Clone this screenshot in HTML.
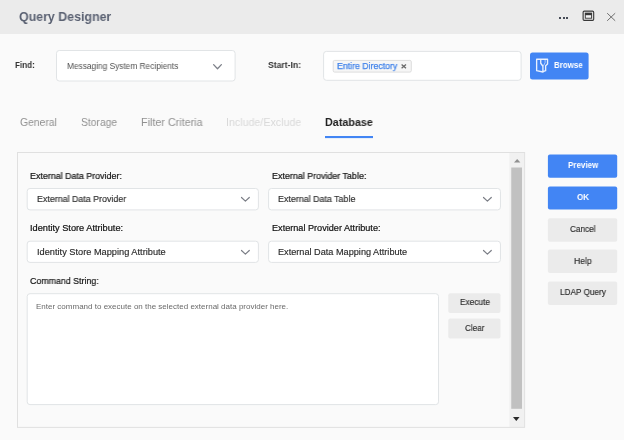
<!DOCTYPE html>
<html><head><meta charset="utf-8">
<style>
*{box-sizing:border-box;margin:0;padding:0}
html,body{width:624px;height:440px;overflow:hidden}
body{background:#fafafa;font-family:"Liberation Sans",sans-serif;position:relative;color:#333}
.abs{position:absolute}
.t{position:absolute;white-space:nowrap;line-height:12px;transform-origin:0 50%;will-change:transform}
.hdr{left:0;top:0;width:624px;height:33.5px;background:#ebebeb}
.box{position:absolute;background:#fff;border:1px solid #e1e5e7;border-radius:2.5px}
.btn{position:absolute;left:548px;width:69.2px;height:23.2px;border-radius:2px}
.blue{background:#4285f4}
.gray{background:#ebebeb}
svg{position:absolute;overflow:visible}
</style></head><body>
<div class="abs hdr"></div>
<!-- header icons -->
<div class="abs" style="left:559px;top:16.8px;width:2.2px;height:2.3px;background:#474c57"></div>
<div class="abs" style="left:562.6px;top:16.8px;width:2.2px;height:2.3px;background:#474c57"></div>
<div class="abs" style="left:566.2px;top:16.8px;width:2.2px;height:2.3px;background:#474c57"></div>
<svg style="left:582px;top:9.6px" width="13" height="12" viewBox="0 0 13 12"><rect x="0.1" y="0.1" width="12.6" height="11.2" rx="1.8" fill="#f7f7f7"/><rect x="1.1" y="1.1" width="10.6" height="9.2" rx="1.1" fill="#e4e4e4" stroke="#383838" stroke-width="1.15"/><rect x="3.3" y="3.2" width="6.3" height="5" fill="#f6f6f6" stroke="#383838" stroke-width="0.9"/><rect x="3.1" y="2.9" width="6.7" height="2.3" fill="#383838"/></svg>
<svg style="left:607.2px;top:12.5px" width="8.4" height="8" viewBox="0 0 8.4 8"><path d="M0.2 0.2L8.2 7.8M8.2 0.2L0.2 7.8" stroke="#6e6e6e" stroke-width="1" fill="none"/></svg>

<!-- boxes -->
<svg style="left:0;top:0" width="624" height="440" viewBox="0 0 624 440">
<rect x="509.4" y="153" width="14.8" height="274" fill="#f1f1f1"/>
<rect x="511.25" y="167.5" width="10.75" height="241.3" fill="#c1c1c1"/>
<rect x="17.5" y="152.5" width="507.10" height="274.90" rx="0" fill="none" stroke="#e0e0e0" stroke-width="1"/>
<rect x="56.5" y="50.5" width="178.60" height="30.50" rx="2.8" fill="#fff" stroke="#e1e4e6" stroke-width="1"/>
<rect x="323.6" y="51.4" width="197.50" height="28.90" rx="2.8" fill="#fff" stroke="#e1e4e6" stroke-width="1"/>
<rect x="27.2" y="188.5" width="231.20" height="21.40" rx="2.8" fill="#fff" stroke="#e1e4e6" stroke-width="1"/>
<rect x="268.6" y="188.5" width="231.85" height="21.40" rx="2.8" fill="#fff" stroke="#e1e4e6" stroke-width="1"/>
<rect x="27.2" y="241.2" width="231.20" height="21.20" rx="2.8" fill="#fff" stroke="#e1e4e6" stroke-width="1"/>
<rect x="268.6" y="241.2" width="231.85" height="21.20" rx="2.8" fill="#fff" stroke="#e1e4e6" stroke-width="1"/>
<rect x="27.2" y="293.7" width="411.30" height="110.90" rx="2.8" fill="#fff" stroke="#e1e4e6" stroke-width="1"/>
<rect x="448.25" y="293.25" width="52.25" height="19.75" rx="2" fill="#ebebeb"/>
<rect x="448.25" y="318.5" width="52.25" height="20.00" rx="2" fill="#ebebeb"/>
<rect x="547.9" y="154.4" width="69.30" height="23.30" rx="2" fill="#4285f4"/>
<rect x="547.9" y="186.6" width="69.30" height="23.00" rx="2" fill="#4285f4"/>
<rect x="547.9" y="218.3" width="69.30" height="23.50" rx="2" fill="#ebebeb"/>
<rect x="547.9" y="249.5" width="69.30" height="23.50" rx="2" fill="#ebebeb"/>
<rect x="547.9" y="281.5" width="69.30" height="23.50" rx="2" fill="#ebebeb"/>
<rect x="530.0" y="52.4" width="58.60" height="27.00" rx="2.5" fill="#4285f4"/>
<rect x="333.2" y="60.4" width="78.1" height="11.7" rx="1.5" fill="#f6f6f6" stroke="#dddddd" stroke-width="1"/>
<rect x="325" y="136" width="48" height="2.1" rx="0" fill="#4285f4"/>
</svg>
<!-- find row -->
<svg style="left:212.8px;top:63.7px" width="9" height="5.4" viewBox="0 0 9 5.4"><path d="M0.6 0.6L4.5 4.7L8.4 0.6" stroke="#7d8089" stroke-width="1.3" fill="none" stroke-linecap="round" stroke-linejoin="round"/></svg>
<svg style="left:401px;top:64.2px" width="5.6" height="4.8" viewBox="0 0 5.6 4.8"><path d="M0.6 0.5L5 4.3M5 0.5L0.6 4.3" stroke="#6a6a6a" stroke-width="1.3" fill="none"/></svg>
<svg style="left:532px;top:54px" width="24" height="24" viewBox="0 0 24 24"><path d="M4.64 5.29L15.55 5.29L15.55 10.09L13.64 11.73L13.64 16.64L11.73 17.45M4.64 5.29L4.64 16.64L10.91 18L10.91 12.27L8.73 9.27L8.73 5.45" stroke="#fff" stroke-opacity="0.88" stroke-width="1.35" fill="none" stroke-linejoin="round" stroke-linecap="round"/><path d="M13.09 5.6L13.09 8.73L11.6 11.5" stroke="#fff" stroke-opacity="0.6" stroke-width="1" fill="none" stroke-linejoin="round" stroke-linecap="round"/></svg>

<!-- tabs -->

<!-- panel -->
<svg style="left:513.6px;top:158.6px" width="6.4" height="3.5" viewBox="0 0 6.4 3.5"><path d="M0 3.5L3.2 0L6.4 3.5Z" fill="#909090"/></svg>
<svg style="left:513.4px;top:417.2px" width="6.6" height="3.9" viewBox="0 0 6.6 3.9"><path d="M0 0H6.6L3.3 3.9Z" fill="#2a2a2a"/></svg>

<svg style="left:241.4px;top:197.1px" width="8.8" height="5" viewBox="0 0 8.8 5"><path d="M0.5 0.5L4.4 4.1L8.3 0.5" stroke="#7b7e86" stroke-width="1.2" fill="none" stroke-linecap="round" stroke-linejoin="round"/></svg>
<svg style="left:483.4px;top:197.1px" width="8.8" height="5" viewBox="0 0 8.8 5"><path d="M0.5 0.5L4.4 4.1L8.3 0.5" stroke="#7b7e86" stroke-width="1.2" fill="none" stroke-linecap="round" stroke-linejoin="round"/></svg>
<svg style="left:241.4px;top:249.8px" width="8.8" height="5" viewBox="0 0 8.8 5"><path d="M0.5 0.5L4.4 4.1L8.3 0.5" stroke="#7b7e86" stroke-width="1.2" fill="none" stroke-linecap="round" stroke-linejoin="round"/></svg>
<svg style="left:483.4px;top:249.8px" width="8.8" height="5" viewBox="0 0 8.8 5"><path d="M0.5 0.5L4.4 4.1L8.3 0.5" stroke="#7b7e86" stroke-width="1.2" fill="none" stroke-linecap="round" stroke-linejoin="round"/></svg>


<!-- right buttons -->

<div class="t" style="left:19.10px;top:10.66px;font-size:12.8px;font-weight:bold;color:#5a6172;transform:scaleX(0.9684)">Query Designer</div>
<div class="t" style="left:15.40px;top:59.48px;font-size:9px;font-weight:bold;color:#333;transform:scaleX(0.9000)">Find:</div>
<div class="t" style="left:66.70px;top:59.89px;font-size:8.7px;color:#505050;transform:scaleX(0.9573)">Messaging System Recipients</div>
<div class="t" style="left:268.20px;top:59.28px;font-size:9px;font-weight:bold;color:#333;transform:scaleX(0.9565)">Start-In:</div>
<div class="t" style="left:337.40px;top:59.78px;font-size:9px;color:#3d80ea;-webkit-text-stroke:0.25px #3d80ea;transform:scaleX(0.9723)">Entire Directory</div>
<div class="t" style="left:553.90px;top:59.28px;font-size:9px;font-weight:bold;color:#fff;transform:scaleX(0.8827)">Browse</div>
<div class="t" style="left:19.80px;top:116.22px;font-size:10.9px;color:#909090;transform:scaleX(0.9523)">General</div>
<div class="t" style="left:80.70px;top:116.22px;font-size:10.9px;color:#909090;transform:scaleX(0.9487)">Storage</div>
<div class="t" style="left:140.70px;top:116.22px;font-size:10.9px;color:#909090;transform:scaleX(0.9883)">Filter Criteria</div>
<div class="t" style="left:225.90px;top:116.22px;font-size:10.9px;color:#d9d9d9;transform:scaleX(0.9793)">Include/Exclude</div>
<div class="t" style="left:325.00px;top:116.22px;font-size:10.9px;font-weight:bold;color:#222;transform:scaleX(0.9889)">Database</div>
<div class="t" style="left:30.20px;top:169.58px;font-size:9px;color:#111;-webkit-text-stroke:0.2px #111;transform:scaleX(0.9877)">External Data Provider:</div>
<div class="t" style="left:36.70px;top:192.88px;font-size:9px;color:#2a2a2a;-webkit-text-stroke:0.15px #2a2a2a;transform:scaleX(0.9851)">External Data Provider</div>
<div class="t" style="left:272.20px;top:169.58px;font-size:9px;color:#111;-webkit-text-stroke:0.2px #111;transform:scaleX(0.9896)">External Provider Table:</div>
<div class="t" style="left:278.40px;top:192.88px;font-size:9px;color:#2a2a2a;-webkit-text-stroke:0.15px #2a2a2a;transform:scaleX(0.9874)">External Data Table</div>
<div class="t" style="left:30.40px;top:222.48px;font-size:9px;color:#111;-webkit-text-stroke:0.2px #111;transform:scaleX(1.0224)">Identity Store Attribute:</div>
<div class="t" style="left:36.80px;top:245.58px;font-size:9px;color:#2a2a2a;-webkit-text-stroke:0.15px #2a2a2a;transform:scaleX(1.0249)">Identity Store Mapping Attribute</div>
<div class="t" style="left:272.20px;top:222.48px;font-size:9px;color:#111;-webkit-text-stroke:0.2px #111;transform:scaleX(1.0134)">External Provider Attribute:</div>
<div class="t" style="left:278.40px;top:245.58px;font-size:9px;color:#2a2a2a;-webkit-text-stroke:0.15px #2a2a2a;transform:scaleX(1.0167)">External Data Mapping Attribute</div>
<div class="t" style="left:30.20px;top:274.88px;font-size:9px;color:#111;-webkit-text-stroke:0.2px #111;transform:scaleX(0.9810)">Command String:</div>
<div class="t" style="left:35.50px;top:300.63px;font-size:8px;color:#6a6a6a;transform:scaleX(1.0006)">Enter command to execute on the selected external data provider here.</div>
<div class="t" style="left:460.00px;top:296.48px;font-size:9px;color:#2a2a2a;-webkit-text-stroke:0.15px #2a2a2a;transform:scaleX(0.9222)">Execute</div>
<div class="t" style="left:465.00px;top:321.98px;font-size:9px;color:#2a2a2a;-webkit-text-stroke:0.15px #2a2a2a;transform:scaleX(0.9063)">Clear</div>
<div class="t" style="left:567.50px;top:159.18px;font-size:9px;font-weight:bold;color:#fff;transform:scaleX(0.8904)">Preview</div>
<div class="t" style="left:576.70px;top:191.28px;font-size:9px;font-weight:bold;color:#fff;transform:scaleX(0.8889)">OK</div>
<div class="t" style="left:569.70px;top:223.28px;font-size:9px;color:#2a2a2a;-webkit-text-stroke:0.15px #2a2a2a;transform:scaleX(0.9102)">Cancel</div>
<div class="t" style="left:573.75px;top:254.63px;font-size:9px;color:#2a2a2a;-webkit-text-stroke:0.15px #2a2a2a;transform:scaleX(0.9586)">Help</div>
<div class="t" style="left:559.50px;top:285.88px;font-size:9px;color:#2a2a2a;-webkit-text-stroke:0.15px #2a2a2a;transform:scaleX(0.9134)">LDAP Query</div>
</body></html>
